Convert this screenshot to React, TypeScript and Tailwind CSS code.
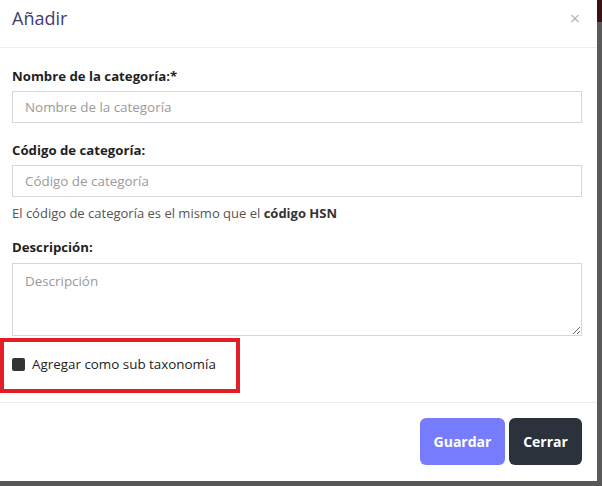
import React from 'react';

export default function App() {
    return (
        <div className="w-[602px] h-[486px] flex flex-col bg-[#575757] overflow-hidden" style={{ fontFamily: '"Open Sans", "Noto Sans", sans-serif' }}>
            <div className="flex flex-1">
                <div className="w-[597px] h-[481px] bg-white flex flex-col">
                    {/* header */}
                    <div className="h-[48px] border-b border-[#ececec] flex items-center justify-between px-3">
                        <h2 className="text-[18px] text-[#403d6e] leading-none -mt-[12px]">Añadir</h2>
                        <button className="text-[#b5b5b5] text-[18px] leading-none -mt-[12px] mr-[5px]">×</button>
                    </div>

                    {/* body */}
                    <div className="flex flex-col px-3 pt-[18px] flex-1">
                        <label className="text-[13.2px] font-bold text-[#1f1f1f] leading-5">Nombre de la categoría:*</label>
                        <input
                            className="mt-[5px] h-[32px] w-[570px] border border-[#d6d7de] px-3 text-[13.4px] placeholder:text-[#9a9a9a] outline-none"
                            placeholder="Nombre de la categoría"
                        />

                        <label className="mt-[17px] text-[13.2px] font-bold text-[#1f1f1f] leading-5">Código de categoría:</label>
                        <input
                            className="mt-[5px] h-[32px] w-[570px] border border-[#d6d7de] px-3 text-[13.4px] placeholder:text-[#9a9a9a] outline-none"
                            placeholder="Código de categoría"
                        />
                        <p className="mt-[6px] text-[13px] text-[#555] leading-5">
                            El código de categoría es el mismo que el <b className="text-[#333]">código HSN</b>
                        </p>

                        <label className="mt-[14px] text-[13.2px] font-bold text-[#1f1f1f] leading-5">Descripción:</label>
                        <textarea
                            className="mt-[6px] h-[73px] w-[570px] border border-[#d6d7de] px-3 py-[7px] text-[13.4px] placeholder:text-[#9a9a9a] outline-none"
                            placeholder="Descripción"
                        />

                        <div className="-ml-3 mt-[2px] w-[240px] h-[55px] border-[4px] border-[#e41e26] flex items-start pt-[12px] pl-[8px] gap-[7px]">
                            <span className="mt-[4px] w-[13px] h-[13px] bg-[#333] rounded-[2px]"></span>
                            <span className="text-[13.4px] text-[#222] leading-5">Agregar como sub taxonomía</span>
                        </div>
                    </div>

                    {/* footer */}
                    <div className="h-[79px] border-t border-[#ececec] flex justify-end items-start pt-[15px] pr-[15px] gap-[4px]">
                        <button className="w-[85px] h-[47px] rounded-[6px] bg-[#777cff] text-white text-[14px] font-bold">Guardar</button>
                        <button className="w-[73px] h-[47px] rounded-[6px] bg-[#2b323b] text-white text-[14px] font-bold">Cerrar</button>
                    </div>
                </div>
                <div className="w-[5px] flex flex-col">
                    <div className="h-[22px] bg-[#3a1214]"></div>
                    <div className="flex-1 bg-[#5a5a5a]"></div>
                </div>
            </div>
            <div className="h-[5px] bg-[#575757]"></div>
        </div>
    );
}
